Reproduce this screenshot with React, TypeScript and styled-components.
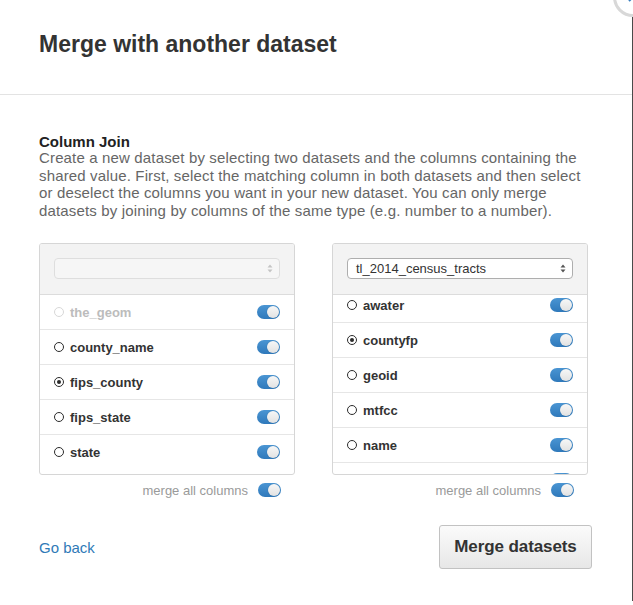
import React, { useEffect, useRef } from "react";
import styled, { createGlobalStyle } from "styled-components";

const Global = createGlobalStyle`
  html, body { margin: 0; padding: 0; background: #fff; }
  body { font-family: "Liberation Sans", Arial, Helvetica, sans-serif; color: #333; overflow: hidden; }
`;

const Page = styled.div`
  position: relative;
  width: 633px;
  height: 605px;
  overflow: hidden;
`;

const Modal = styled.div`
  width: 632px;
  height: 601px;
  background: #fff;
  border-right: 1px solid #4a4a4a;
  display: flex;
  flex-direction: column;
`;

const CloseButton = styled.div`
  position: absolute;
  left: 613px;
  top: -23px;
  width: 34px;
  height: 34px;
  border-radius: 50%;
  border: 3px solid #d8d8d8;
  background: #fff;
  display: flex;
  align-items: center;
  justify-content: center;
`;

const Header = styled.div`
  padding: 30px 39px 36px;
  border-bottom: 1px solid #e3e3e3;
`;

const Title = styled.h1`
  margin: 0;
  font-size: 23px;
  line-height: 28px;
  font-weight: 700;
  color: #333;
`;

const Body = styled.div`
  padding: 39px 40px 0 39px;
  display: flex;
  flex-direction: column;
`;

const SectionTitle = styled.h2`
  margin: 0;
  font-size: 15px;
  line-height: 15px;
  font-weight: 700;
  color: #222;
`;

const Description = styled.p`
  margin: 0;
  font-size: 15px;
  line-height: 17.5px;
  letter-spacing: 0.15px;
  color: #666;
`;

const Columns = styled.div`
  display: grid;
  grid-template-columns: 256px 256px;
  column-gap: 37px;
  margin-top: 24px;
`;

const Column = styled.div`
  display: flex;
  flex-direction: column;
`;

const Panel = styled.div`
  border: 1px solid #d6d6d6;
  border-radius: 3px;
  overflow: hidden;
  background: #fff;
`;

const PanelHeader = styled.div`
  background: #f3f3f3;
  padding: 14px 14px 15px 14px;
  border-bottom: 1px solid #dcdcdc;
`;

const Select = styled.div<{ $empty?: boolean }>`
  height: 19px;
  border: 1px solid ${(p) => (p.$empty ? "#dedede" : "#aeaeae")};
  border-radius: 4px;
  background: ${(p) => (p.$empty ? "#f6f6f6" : "#fff")};
  display: flex;
  align-items: center;
  justify-content: space-between;
  padding: 0 6px 0 8px;
  font-size: 13px;
  color: #333;
`;

const List = styled.div`
  height: 179px;
  overflow: hidden;
`;

const Row = styled.div`
  height: 34px;
  display: flex;
  align-items: center;
  padding: 0 14px 0 14px;
  border-bottom: 1px solid #e6e6e6;
  &:last-child { border-bottom: none; }
`;

const Radio = styled.span<{ $checked?: boolean; $disabled?: boolean }>`
  width: 8px;
  height: 8px;
  border-radius: 50%;
  border: 1px solid ${(p) => (p.$disabled ? "#d8d8d8" : "#2b2b2b")};
  display: inline-flex;
  align-items: center;
  justify-content: center;
  margin-right: 6px;
  flex: none;
  &::after {
    content: "";
    display: ${(p) => (p.$checked ? "block" : "none")};
    width: 4px;
    height: 4px;
    border-radius: 50%;
    background: #2b2b2b;
  }
`;

const FieldName = styled.span<{ $disabled?: boolean }>`
  flex: 1;
  font-size: 13px;
  font-weight: 700;
  color: ${(p) => (p.$disabled ? "#bcbcbc" : "#333")};
`;

const Toggle = styled.span`
  width: 23px;
  height: 14px;
  border-radius: 7px;
  background: linear-gradient(#4a95d3, #2f79bb);
  display: inline-flex;
  align-items: center;
  justify-content: flex-end;
  padding-right: 1px;
  box-sizing: border-box;
  flex: none;
  &::after {
    content: "";
    width: 12px;
    height: 12px;
    border-radius: 50%;
    background: linear-gradient(#f7f7f7, #e2e2e2);
    box-shadow: 0 0 1px rgba(0, 0, 0, 0.3);
  }
`;

const MergeAll = styled.div`
  display: flex;
  align-items: center;
  justify-content: flex-end;
  gap: 10px;
  padding-right: 14px;
  margin-top: 8px;
  height: 14px;
  font-size: 13px;
  color: #9a9a9a;
`;

const Footer = styled.div`
  display: flex;
  align-items: center;
  justify-content: space-between;
  margin-top: 28px;
`;

const BackLink = styled.a`
  font-size: 15px;
  color: #2f7ab7;
  text-decoration: none;
`;

const MergeButton = styled.button`
  width: 153px;
  height: 44px;
  border: 1px solid #c2c2c2;
  border-radius: 3px;
  background: linear-gradient(#fbfbfb, #e7e7e7);
  font-family: "Liberation Sans", Arial, sans-serif;
  font-size: 17px;
  font-weight: 700;
  color: #333;
  letter-spacing: -0.1px;
  padding: 0;
`;

const Arrows = ({ color }: { color: string }) => (
  <svg width="6" height="9" viewBox="0 0 6 9">
    <path d="M3 0.5 L5.5 3.5 H0.5 Z" fill={color} />
    <path d="M3 8.5 L5.5 5.5 H0.5 Z" fill={color} />
  </svg>
);

type Field = { name: string; checked?: boolean; disabled?: boolean };

const leftFields: Field[] = [
  { name: "the_geom", disabled: true },
  { name: "county_name" },
  { name: "fips_county", checked: true },
  { name: "fips_state" },
  { name: "state" },
];

const rightFields: Field[] = [
  { name: "awater" },
  { name: "countyfp", checked: true },
  { name: "geoid" },
  { name: "mtfcc" },
  { name: "name" },
  { name: "" },
];

const DatasetPanel = ({
  dataset,
  fields,
  scroll = 0,
}: {
  dataset?: string;
  fields: Field[];
  scroll?: number;
}) => {
  const ref = useRef<HTMLDivElement>(null);
  useEffect(() => {
    if (ref.current) ref.current.scrollTop = scroll;
  }, [scroll]);
  return (
    <Column>
      <Panel>
        <PanelHeader>
          <Select $empty={!dataset}>
            <span>{dataset ?? ""}</span>
            <Arrows color={dataset ? "#555" : "#c4c4c4"} />
          </Select>
        </PanelHeader>
        <List ref={ref}>
          {fields.map((f, i) => (
            <Row key={i}>
              <Radio $checked={f.checked} $disabled={f.disabled} />
              <FieldName $disabled={f.disabled}>{f.name}</FieldName>
              <Toggle />
            </Row>
          ))}
        </List>
      </Panel>
      <MergeAll>
        <span>merge all columns</span>
        <Toggle />
      </MergeAll>
    </Column>
  );
};

export default function App() {
  return (
    <Page>
      <Global />
      <Modal>
        <Header>
          <Title>Merge with another dataset</Title>
        </Header>
        <Body>
          <SectionTitle>Column Join</SectionTitle>
          <Description>
            Create a new dataset by selecting two datasets and the columns containing the
            shared value. First, select the matching column in both datasets and then select
            or deselect the columns you want in your new dataset. You can only merge
            datasets by joining by columns of the same type (e.g. number to a number).
          </Description>
          <Columns>
            <DatasetPanel fields={leftFields} />
            <DatasetPanel dataset="tl_2014_census_tracts" fields={rightFields} scroll={7} />
          </Columns>
          <Footer>
            <BackLink href="#">Go back</BackLink>
            <MergeButton>Merge datasets</MergeButton>
          </Footer>
        </Body>
      </Modal>
      <CloseButton>
        <svg width="12" height="12" viewBox="0 0 12 12">
          <path d="M2 2 L10 10 M10 2 L2 10" stroke="#3a7fbf" strokeWidth="2" />
        </svg>
      </CloseButton>
    </Page>
  );
}
